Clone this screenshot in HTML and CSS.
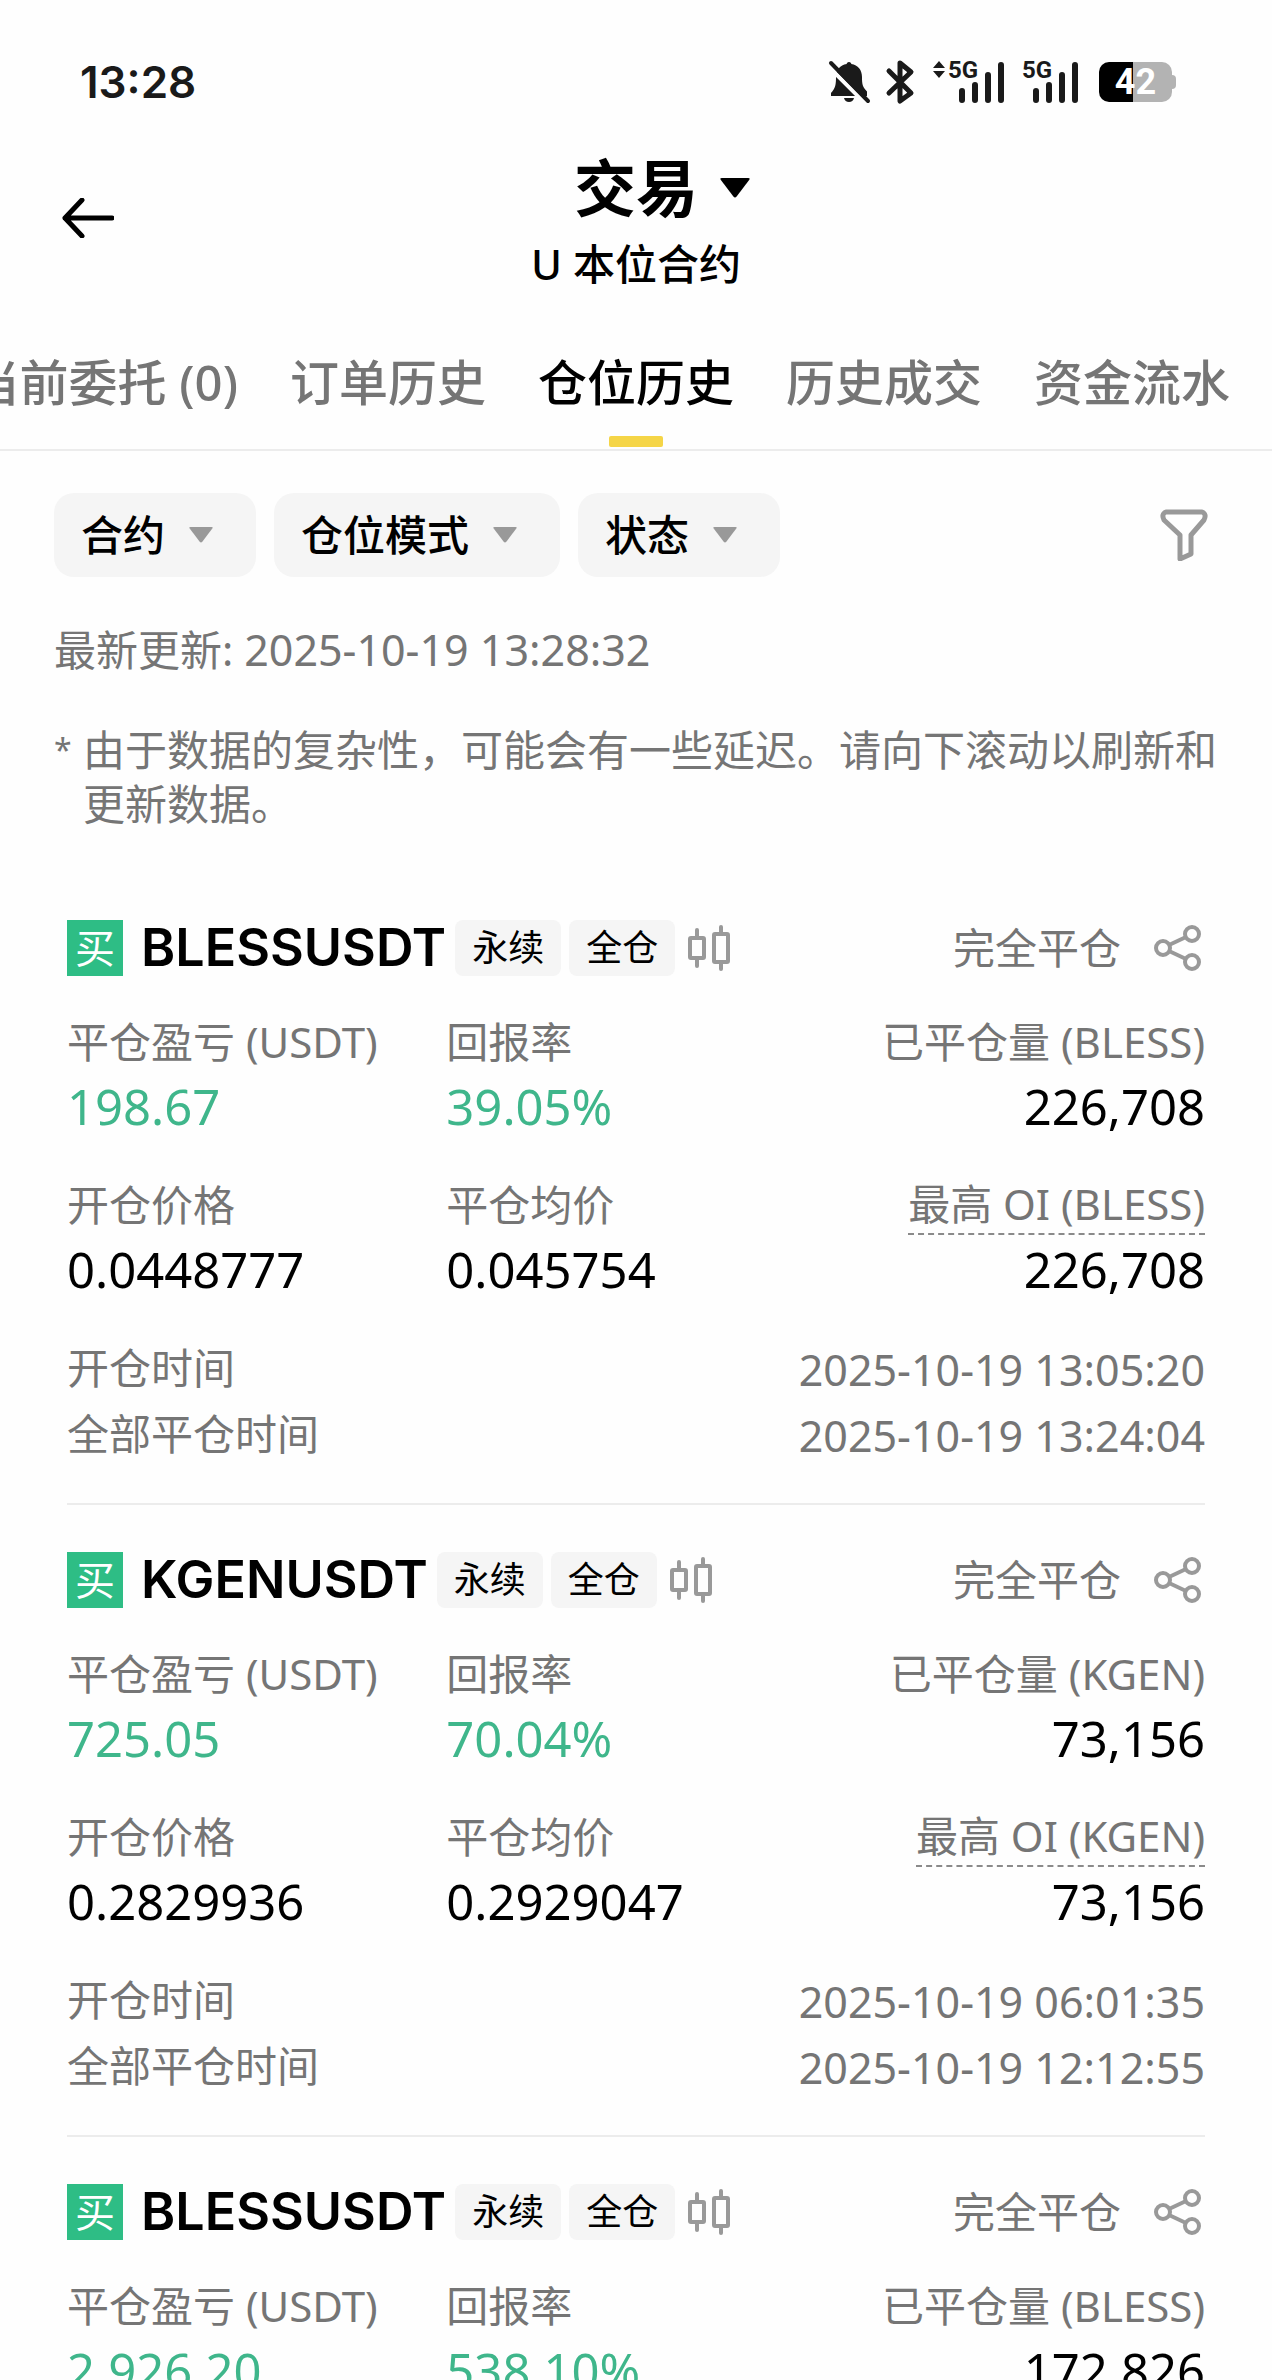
FILE: index.html
```html
<!DOCTYPE html>
<html lang="zh-CN">
<head>
<meta charset="utf-8">
<meta name="viewport" content="width=device-width, initial-scale=1">
<title>交易 - 仓位历史</title>
<link rel="stylesheet" href="styles.css">
</head>
<body>
<svg class="sprite" aria-hidden="true">
  <symbol id="i-candle" viewBox="0 0 42 46">
    <g fill="none" stroke="#999" stroke-width="4">
      <rect x="2" y="13" width="14" height="20" rx="1"/>
      <path d="M9 5v8M9 33v8" stroke-linecap="round"/>
      <rect x="26" y="9" width="14" height="28" rx="1"/>
      <path d="M33 2v7M33 37v7" stroke-linecap="round"/>
    </g>
  </symbol>
  <symbol id="i-share" viewBox="0 0 48 48">
    <g fill="none" stroke="#999" stroke-width="4">
      <circle cx="9" cy="24" r="7"/>
      <circle cx="38" cy="10" r="7"/>
      <circle cx="38" cy="38" r="7"/>
      <path d="M15 21l17-8M15 27l17 8"/>
    </g>
  </symbol>
  <symbol id="i-caret" viewBox="0 0 24 16">
    <path d="M1.500 0h21q2 0 .8 1.600L13.300 14.800q-1.300 1.600-2.600 0L.7 1.600Q-.5 0 1.500 0z" fill="currentColor"/>
  </symbol>
</svg>

<div class="app">
  <div class="status">
    <span class="clock">13:28</span>
    <div class="status-icons">
      <svg class="bell" width="42" height="44" viewBox="0 0 42 44" aria-label="静音">
        <path d="M20 2c1.500 0 2.300 1 2.300 2C29 5 33 10 33 17c0 7 .5 10 5 14.500V36H2v-3C6.500 28.500 7 24 7 17 7 10 11 5 17.700 4c0-1 .8-2 2.300-2z" fill="#1a1a1a"/>
        <path d="M-1 6l38 38" stroke="#fefefe" stroke-width="4"/>
        <path d="M15 38h10q-1 4-5 4t-5-4z" fill="#1a1a1a"/>
        <path d="M2 3l37 38" stroke="#1a1a1a" stroke-width="4" stroke-linecap="round"/>
      </svg>
      <svg class="bt" width="28" height="44" viewBox="0 0 28 44" aria-label="蓝牙">
        <path d="M3 11l22 22-11 8V3l11 9L3 33" fill="none" stroke="#1a1a1a" stroke-width="5" stroke-linejoin="round" stroke-linecap="round"/>
      </svg>
      <svg class="signal-a" width="72" height="44" viewBox="0 0 72 44" aria-label="5G 信号">
        <path d="M0 8l6-7 6 7zM0 11l6 7 6-7z" fill="#1a1a1a"/>
        <text class="net" x="15" y="18">5G</text>
        <path d="M29 31v9M42 25v15M55 15v25M68 5v35" stroke="#1a1a1a" stroke-width="6" stroke-linecap="round"/>
      </svg>
      <svg class="signal-b" width="57" height="44" viewBox="0 0 57 44" aria-label="5G 信号">
        <text class="net" x="0" y="18">5G</text>
        <path d="M14 31v9M27 25v15M40 15v25M53 5v35" stroke="#1a1a1a" stroke-width="6" stroke-linecap="round"/>
      </svg>
      <div class="battery"><span>42</span></div>
    </div>
  </div>

  <header class="topbar">
    <button class="back" type="button" aria-label="返回">
      <svg width="52" height="40" viewBox="0 0 52 40"><path d="M50 20H3M20 2L3 20l17 18" fill="none" stroke="#000" stroke-width="5" stroke-linecap="round" stroke-linejoin="round"/></svg>
    </button>
    <button class="heading" type="button">
      <span class="title">交易 <svg class="title-caret" width="30" height="20"><use href="#i-caret"/></svg></span>
      <span class="subtitle">U 本位合约</span>
    </button>
  </header>

  <nav class="tabs">
    <a href="#orders">当前委托 (0)</a>
    <a href="#order-history">订单历史</a>
    <a class="active" href="#positions" aria-current="page">仓位历史</a>
    <a href="#trades">历史成交</a>
    <a href="#funds">资金流水</a>
  </nav>

  <div class="filters">
    <button class="chip" type="button"><span>合约</span><svg width="24" height="16"><use href="#i-caret"/></svg></button>
    <button class="chip" type="button"><span>仓位模式</span><svg width="24" height="16"><use href="#i-caret"/></svg></button>
    <button class="chip" type="button"><span>状态</span><svg width="24" height="16"><use href="#i-caret"/></svg></button>
    <button class="funnel" type="button" aria-label="筛选">
      <svg width="48" height="52" viewBox="0 0 48 52"><path d="M6 3h36q5 2 2 8L31 26v19l-11 5V26L4 11Q1 5 6 3z" fill="none" stroke="#999" stroke-width="5" stroke-linejoin="round"/></svg>
    </button>
  </div>

  <p class="updated">最新更新: <time>2025-10-19 13:28:32</time></p>
  <p class="note"><span class="star">*</span><span>由于数据的复杂性，可能会有一些延迟。请向下滚动以刷新和更新数据。</span></p>

  <main class="list">
    <article class="card">
      <div class="card-head">
        <span class="side">买</span>
        <h2>BLESSUSDT</h2>
        <span class="tag">永续</span><span class="tag">全仓</span>
        <svg class="candle" width="42" height="46"><use href="#i-candle"/></svg>
        <span class="state">完全平仓</span>
        <button class="share" type="button" aria-label="分享"><svg width="48" height="48"><use href="#i-share"/></svg></button>
      </div>
      <dl class="stats">
        <div><dt>平仓盈亏 (USDT)</dt><dd class="up">198.67</dd></div>
        <div><dt>回报率</dt><dd class="up">39.05%</dd></div>
        <div><dt>已平仓量 (BLESS)</dt><dd>226,708</dd></div>
        <div><dt>开仓价格</dt><dd>0.0448777</dd></div>
        <div><dt>平仓均价</dt><dd>0.045754</dd></div>
        <div><dt class="hint">最高 OI (BLESS)</dt><dd>226,708</dd></div>
      </dl>
      <dl class="times">
        <div><dt>开仓时间</dt><dd>2025-10-19 13:05:20</dd></div>
        <div><dt>全部平仓时间</dt><dd>2025-10-19 13:24:04</dd></div>
      </dl>
    </article>

    <article class="card">
      <div class="card-head">
        <span class="side">买</span>
        <h2>KGENUSDT</h2>
        <span class="tag">永续</span><span class="tag">全仓</span>
        <svg class="candle" width="42" height="46"><use href="#i-candle"/></svg>
        <span class="state">完全平仓</span>
        <button class="share" type="button" aria-label="分享"><svg width="48" height="48"><use href="#i-share"/></svg></button>
      </div>
      <dl class="stats">
        <div><dt>平仓盈亏 (USDT)</dt><dd class="up">725.05</dd></div>
        <div><dt>回报率</dt><dd class="up">70.04%</dd></div>
        <div><dt>已平仓量 (KGEN)</dt><dd>73,156</dd></div>
        <div><dt>开仓价格</dt><dd>0.2829936</dd></div>
        <div><dt>平仓均价</dt><dd>0.2929047</dd></div>
        <div><dt class="hint">最高 OI (KGEN)</dt><dd>73,156</dd></div>
      </dl>
      <dl class="times">
        <div><dt>开仓时间</dt><dd>2025-10-19 06:01:35</dd></div>
        <div><dt>全部平仓时间</dt><dd>2025-10-19 12:12:55</dd></div>
      </dl>
    </article>

    <article class="card">
      <div class="card-head">
        <span class="side">买</span>
        <h2>BLESSUSDT</h2>
        <span class="tag">永续</span><span class="tag">全仓</span>
        <svg class="candle" width="42" height="46"><use href="#i-candle"/></svg>
        <span class="state">完全平仓</span>
        <button class="share" type="button" aria-label="分享"><svg width="48" height="48"><use href="#i-share"/></svg></button>
      </div>
      <dl class="stats">
        <div><dt>平仓盈亏 (USDT)</dt><dd class="up">2,926.20</dd></div>
        <div><dt>回报率</dt><dd class="up">538.10%</dd></div>
        <div><dt>已平仓量 (BLESS)</dt><dd>172,826</dd></div>
      </dl>
    </article>
  </main>
</div>
</body>
</html>
```
FILE: styles.css
```css
* { box-sizing: border-box; margin: 0; padding: 0; }

body {
  background: #fefefe;
  color: #000;
  font-family: "Noto Sans", "Noto Sans CJK SC", sans-serif;
  font-size: 42px;
}

button { border: 0; background: none; color: inherit; font: inherit; cursor: pointer; }
a { color: inherit; text-decoration: none; }
svg { display: block; flex: none; }
.sprite { display: none; }

.app { display: flex; flex-direction: column; height: 100vh; overflow: hidden; }
.app > * { flex: none; }

/* Status bar */
.status {
  display: flex;
  align-items: center;
  justify-content: space-between;
  height: 164px;
  padding: 0 96px 0 80px;
  color: #1a1a1a;
}
.clock { font: 600 44px/60px Inter, sans-serif; }
.status-icons { display: flex; align-items: center; }
.status-icons svg { overflow: visible; }
.bt { margin-left: 15px; }
.signal-a { margin-left: 19px; }
.signal-b { margin-left: 17px; }
.net { font: 700 24px Roboto, sans-serif; fill: #1a1a1a; }
.battery {
  position: relative;
  width: 73px;
  height: 40px;
  margin: 0 4px 0 20px;
  border-radius: 10px;
  background: linear-gradient(to right, #000 46%, #b3b3b3 46%);
  color: #fff;
  font: 700 36px/40px Roboto, sans-serif;
  text-align: center;
}
.battery::after {
  content: "";
  position: absolute;
  top: 13px;
  right: -4px;
  width: 4px;
  height: 14px;
  border-radius: 0 4px 4px 0;
  background: #b3b3b3;
}

/* Title bar */
.topbar {
  display: grid;
  grid-template-columns: 1fr auto 1fr;
  align-items: start;
  height: 152px;
}
.back { justify-self: start; margin: 34px 0 0 62px; }
.heading { display: flex; flex-direction: column; align-items: center; margin-top: -18px; }
.title { display: flex; align-items: center; gap: 22px; padding-left: 52px; font-size: 62px; line-height: 84px; font-weight: 700; }
.subtitle { margin-top: 5px; font-size: 42px; line-height: 58px; font-weight: 500; }

/* Tabs */
.tabs {
  display: flex;
  justify-content: flex-end;
  gap: 52px;
  height: 135px;
  padding-right: 42px;
  overflow: hidden;
  border-bottom: 2px solid #ececec;
  color: #757575;
  font-size: 49px;
  line-height: 132px;
  font-weight: 500;
  white-space: nowrap;
}
.tabs a { position: relative; }
.tabs .active { color: #000; }
.tabs .active::after {
  content: "";
  position: absolute;
  left: 50%;
  bottom: 2px;
  width: 54px;
  height: 11px;
  margin-left: -27px;
  border-radius: 2px;
  background: #f5d547;
}

/* Filters */
.filters { display: flex; gap: 18px; align-items: center; padding: 42px 64px 0 54px; }
.chip {
  display: flex;
  align-items: center;
  gap: 24px;
  height: 84px;
  padding: 0 43px 0 27px;
  border-radius: 20px;
  background: #f5f5f5;
  font-size: 42px;
  font-weight: 500;
}
.chip span { padding-bottom: 5px; }
.chip svg { color: #999; }
.funnel { margin-left: auto; }

.updated, .note { padding: 0 54px; color: #757575; }
.updated { margin-top: 43px; line-height: 60px; }
time, .times dd { font-size: 43px; }
.note { display: flex; margin-top: 43px; padding-right: 40px; line-height: 54px; }
.star { flex: none; width: 29px; font-size: 32px; }

/* Positions */
.list { flex: 1; min-height: 0; margin-top: 42px; padding: 0 67px; overflow: hidden; }
.card { padding: 47px 0 34px; border-bottom: 2px solid #ececec; }
.card-head { display: flex; align-items: center; height: 56px; }
.side { width: 56px; background: #2ebd85; color: #fff; font-size: 40px; line-height: 56px; text-align: center; }
.card-head h2 { margin: 0 9px 0 18px; font: 600 52px/56px Inter, sans-serif; }
.tag {
  margin-right: 8px;
  padding: 0 17px;
  border-radius: 8px;
  background: #f5f5f5;
  font-size: 36px;
  line-height: 56px;
}
.candle { margin-left: 5px; }
.state { margin-left: auto; color: #757575; line-height: 56px; }
.share { margin: 0 3px 0 33px; }

.stats { display: grid; grid-template-columns: repeat(3, 1fr); row-gap: 35px; margin-top: 36px; }
.stats div:nth-child(3n) { text-align: right; }
dt { color: #757575; line-height: 60px; white-space: nowrap; }
.stats dd { font-size: 49px; line-height: 68px; }
.stats .up { color: #3fb68b; }
.hint { display: inline-block; border-bottom: 2px dashed #8a8a8a; line-height: 58px; }
.times { margin-top: 34px; }
.times div { display: flex; justify-content: space-between; }
.times dt { color: #757575; line-height: 62px; }
.times dd { color: #757575; line-height: 66px; }
```
